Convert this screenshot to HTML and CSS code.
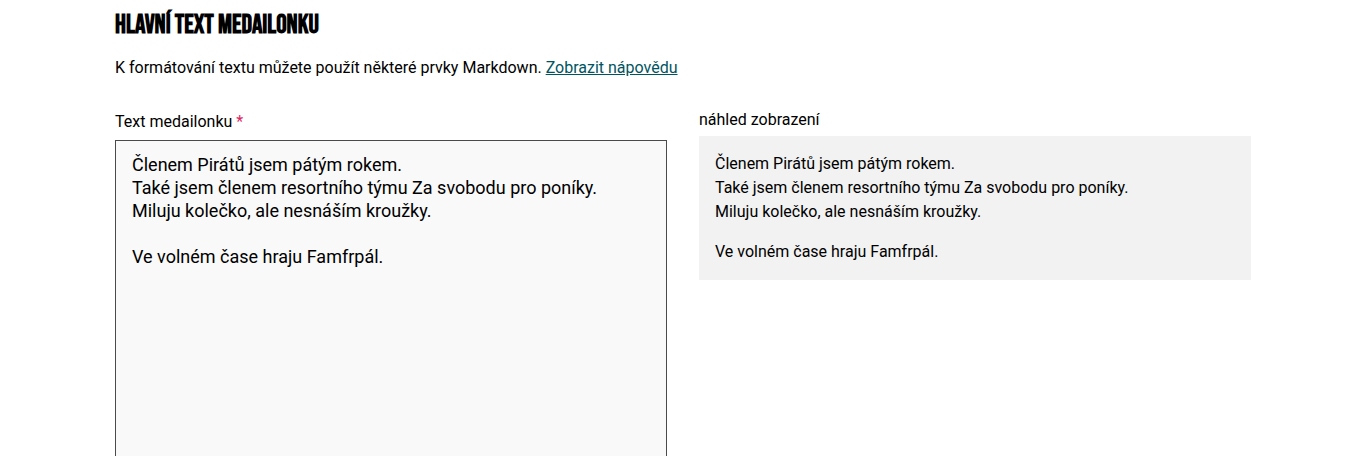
FILE: index.html
```html
<!DOCTYPE html>
<html lang="cs">
<head>
<meta charset="utf-8">
<title>Hlavní text medailonku</title>
<link rel="stylesheet" href="styles.css">
</head>
<body>
<div class="container">
  <h2 class="heading">Hlavní text medailonku</h2>
  <p class="help">K formátování textu můžete použít některé prvky Markdown. <a href="#" class="link">Zobrazit nápovědu</a></p>
  <div class="grid">
    <div class="col col-left">
      <label class="label" for="bio">Text medailonku <span class="req">*</span></label>
      <textarea id="bio" class="textarea" readonly>Členem Pirátů jsem pátým rokem.
Také jsem členem resortního týmu Za svobodu pro poníky.
Miluju kolečko, ale nesnáším kroužky.

Ve volném čase hraju Famfrpál.</textarea>
    </div>
    <div class="col col-right">
      <div class="label label-preview">náhled zobrazení</div>
      <div class="preview">
        <p>Členem Pirátů jsem pátým rokem.<br>Také jsem členem resortního týmu Za svobodu pro poníky.<br>Miluju kolečko, ale nesnáším kroužky.</p>
        <p>Ve volném čase hraju Famfrpál.</p>
      </div>
    </div>
  </div>
</div>
</body>
</html>
```
FILE: styles.css
```css
html, body {
  margin: 0;
  padding: 0;
  background: #fff;
}
body {
  font-family: Roboto, "Noto Sans", Arial, sans-serif;
  font-size: 16px;
  line-height: 24px;
  color: #000;
  overflow: hidden;
}
.container {
  width: 1136px;
  margin: 0 auto;
  padding-top: 11px;
}
.heading {
  margin: 0;
  height: 30px;
  font-family: "Bebas Neue", "Liberation Sans Narrow", "DejaVu Sans Condensed", sans-serif;
  font-weight: 700;
  font-size: 26px;
  line-height: 30px;
  text-transform: uppercase;
  white-space: nowrap;
}
.help {
  margin: 15px 0 0;
}
.link {
  color: #00545f;
  text-decoration: underline;
}
.grid {
  display: grid;
  grid-template-columns: 552px 552px;
  column-gap: 32px;
  margin-top: 28px;
}
.col-left {
  padding-top: 2px;
}
.label {
  display: block;
  margin-bottom: 6px;
}
.label-preview {
  margin-bottom: 4px;
}
.req {
  color: #e0245e;
}
.textarea {
  display: block;
  box-sizing: border-box;
  width: 552px;
  height: 340px;
  margin: 0;
  padding: 12px 16px;
  border: 1px solid #4a4a4a;
  border-radius: 0;
  background: #f9f9f9;
  font-family: Roboto, "Noto Sans", Arial, sans-serif;
  font-size: 18px;
  line-height: 23px;
  color: #000;
  resize: none;
  outline: none;
}
.preview {
  background: #f2f2f2;
  padding: 16px;
}
.preview p {
  margin: 0;
}
.preview p + p {
  margin-top: 16px;
}
```
